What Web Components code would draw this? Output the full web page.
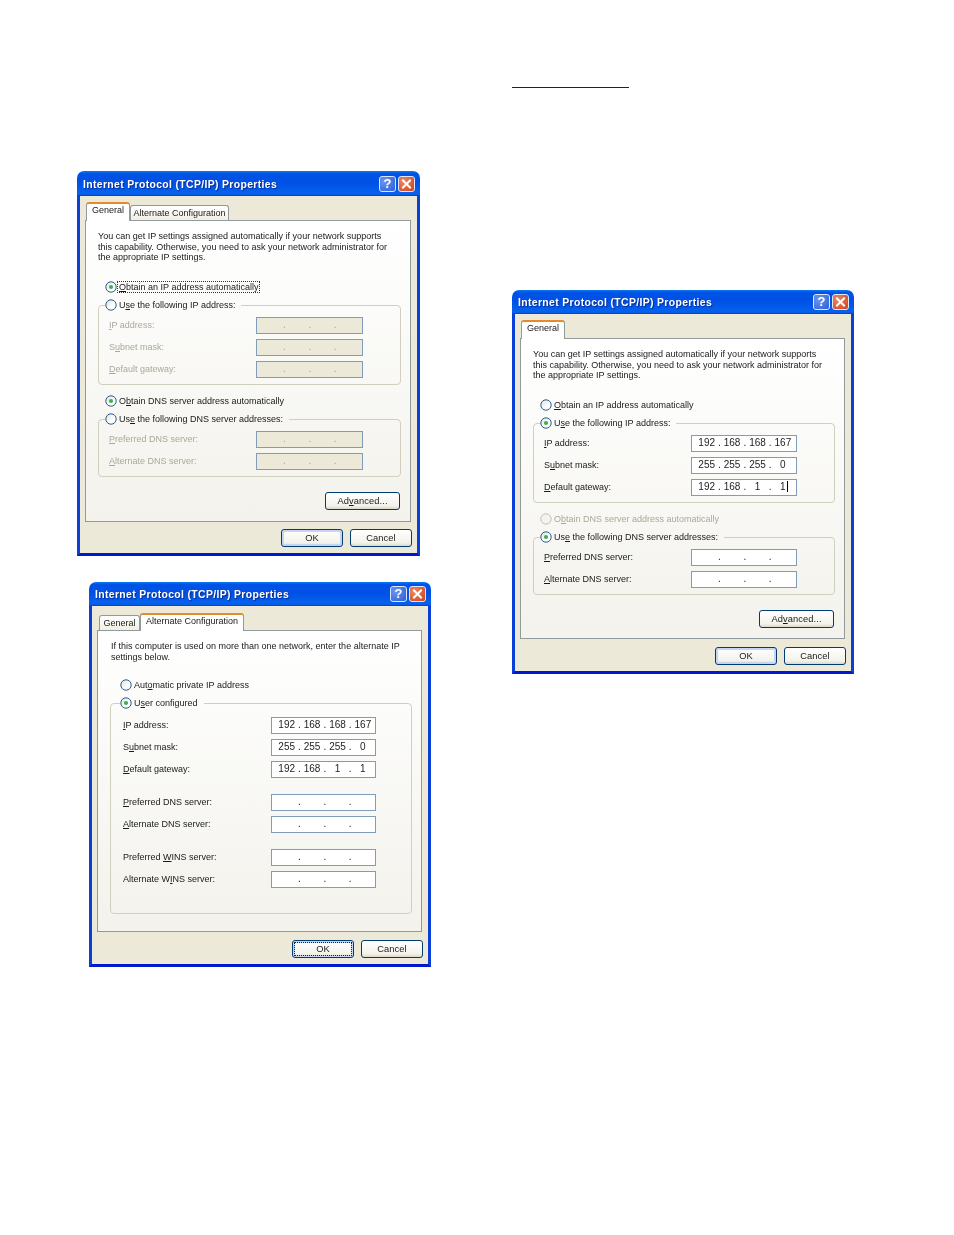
<!DOCTYPE html>
<html><head><meta charset="utf-8"><title>TCP/IP Properties</title>
<style>
html,body{margin:0;background:#fff}
body{display:flex;height:1235px;overflow:hidden;padding-left:77px;box-sizing:border-box;font:9px/10.7px "Liberation Sans",Arial,sans-serif;color:#1a1a1a}
.left{padding-top:171px}
.right{margin-left:81px}
</style></head>
<body>
<template id="t-dialog">
<style>
:host{display:flex;flex-direction:column;box-sizing:border-box;width:var(--w,343px);height:var(--h,385px);filter:blur(.35px)}
.title{flex:none;height:var(--th,25px);display:flex;align-items:center;border-radius:7px 7px 0 0;padding:0 5px 0 6px;box-sizing:border-box;
 background:linear-gradient(#0a7cf0 0,#0053e6 10%,#0050e4 45%,#0461ee 85%,#0a5de8 93%,#003dd0 100%)}
.title b{flex:1;color:#fff;font:bold 10.4px/14px "Liberation Sans",Arial,sans-serif;letter-spacing:.36px;text-shadow:1px 1px 1px #0a2a90;padding-top:2px}
.cap{width:17px;height:16px;box-sizing:border-box;border:1px solid #dfe8fb;border-radius:3px;display:flex;align-items:center;justify-content:center;margin-left:2px}
.help{background:radial-gradient(circle at 30% 30%,#6b97f0,#2c5cd8);color:#fff;font:bold 13px/14px "Liberation Sans",Arial,sans-serif}
.close{background:radial-gradient(circle at 30% 30%,#ea8a66,#cf4016)}
.body{flex:1;min-height:0;display:flex;flex-direction:column;background:#ece9d8;border:3px solid #0a3fd8;border-top:0;border-bottom-color:#0019cf;padding:var(--pt,6px) 6px 6px 5px}
.strip{flex:none;height:var(--sh,18px);display:flex;align-items:flex-end;padding-left:var(--sl,1px);position:relative;z-index:1}
.panel{flex:1;min-height:0;box-sizing:border-box;border:1px solid #919b9c;background:linear-gradient(#fff,#f3f2ec);padding:10px 9px 0 12px}
.btns{flex:none;display:flex;justify-content:flex-end;gap:7px;margin:var(--bg,7px) -1px 0 0}
</style>
<div class="title"><b></b>
<span class="cap help">?</span>
<span class="cap close"><svg width="11" height="10" viewBox="0 0 11 10"><path d="M2 1.5l7 7M9 1.5l-7 7" stroke="#fff" stroke-width="2" stroke-linecap="square" fill="none"/></svg></span></div>
<div class="body">
<div class="strip"><slot name="tabs"></slot></div>
<div class="panel"><slot></slot></div>
<div class="btns"><slot name="btns"></slot></div>
</div>
</template>
<template id="t-tab">
<style>
:host{display:block;box-sizing:border-box;height:15px;padding:0 2.5px;border:1px solid #919b9c;border-bottom:0;border-radius:3px 3px 0 0;background:linear-gradient(#fff,#f1efe4);text-align:center;line-height:15px;white-space:nowrap}
:host([active]){height:calc(var(--sh,18px) + 1px);margin-bottom:-1px;background:#fff;border-top:2px solid #e68b2c;line-height:13px;position:relative;padding:0 5px}
</style><slot></slot>
</template>
<template id="t-radio">
<style>
:host{display:flex;align-items:center;height:var(--rh,18px);white-space:nowrap;margin-left:var(--rx,7px)}
:host([inlegend]){height:14px;margin-left:0}
:host([disabled]){color:#aca899}
svg{flex:none;margin-right:1px}
.t{padding:0 1px}
:host([focus]) .t{outline:1px dotted #333;outline-offset:0}
</style>
<svg width="12" height="12" viewBox="0 0 12 12"><defs><linearGradient id="g" x1="0" y1="0" x2="1" y2="1"><stop offset="0" stop-color="#dcdcd7"/><stop offset=".6" stop-color="#fff"/></linearGradient></defs>
<circle class="c" cx="6" cy="6" r="5.2" fill="url(#g)" stroke="#2a5f8c" stroke-width="1"/><circle class="d" cx="6" cy="6" r="2.1" fill="#3fb04a"/></svg>
<span class="t"><slot></slot></span>
</template>
<template id="t-group">
<style>
:host{display:block;margin-top:var(--gm,2px)}
fieldset{margin:0;padding:var(--gt,5px) var(--gr,37px) var(--gb,6px) var(--gl,10px);border:1px solid #d0d0bf;border-radius:4px;min-width:0}
legend{padding:0 5px 0 0;margin-left:var(--lx,-4px);height:14px;display:block}
.rows{display:flex;flex-direction:column;gap:5px}
</style>
<fieldset><legend><slot name="legend"></slot></legend><div class="rows"><slot></slot></div></fieldset>
</template>
<template id="t-field">
<style>
:host{display:flex;align-items:center;height:17px;white-space:nowrap}
:host([disabled]) .l{color:#aca899}
.l{flex:1}
.i{flex:none;box-sizing:border-box;width:var(--iw,107px);height:17px;border:1px solid #7f9db9;background:#fff;display:flex;align-items:center;padding-left:4px;font-size:10px;color:#222}
:host([disabled]) .i{background:#ece9d8;color:#aca899}
.s{width:21.4px;text-align:center;position:relative}
.p{width:4px;text-align:center}
.caret{position:absolute;width:1px;height:11px;background:#000;top:-1px;margin-left:1px}
</style>
<span class="l"><slot></slot></span><span class="i"></span>
</template>
<template id="t-btn">
<style>
:host{display:flex;box-sizing:border-box;align-items:center;justify-content:center;height:18px;width:var(--bw,62px);border:1px solid #003c74;border-radius:3px;background:linear-gradient(#fff,#f3f2ea 80%,#dcd8c8);white-space:nowrap;font-size:9.3px;letter-spacing:.1px}
:host([def]){box-shadow:inset 0 0 0 2px #c4d6f2}
:host([focus]) span{outline:1px dotted #222;outline-offset:0;display:flex;align-items:center;justify-content:center;width:calc(100% - 4px);height:calc(100% - 4px)}
</style><span><slot></slot></span>
</template>
<script>
const mk=(name,setup)=>customElements.define(name,class extends HTMLElement{
 constructor(){super();const r=this.attachShadow({mode:'open'});r.appendChild(document.getElementById('t-'+name.slice(3)).content.cloneNode(true));}
 connectedCallback(){setup&&setup(this,this.shadowRoot);}
});
mk('xp-dialog',(h,r)=>{r.querySelector('b').textContent=h.getAttribute('heading');});
mk('xp-tab');
mk('xp-radio',(h,r)=>{
 if(!h.hasAttribute('checked'))r.querySelector('.d').remove();
 if(h.hasAttribute('disabled')){r.querySelector('.c').setAttribute('stroke','#c5c2b2');r.querySelector('.c').setAttribute('fill','#f4f3ee');}
});
mk('xp-group');
mk('xp-field',(h,r)=>{
 const box=r.querySelector('.i'),v=(h.getAttribute('value')||'...').split('.');
 v.forEach((x,i)=>{
  const s=document.createElement('span');s.className='s';s.textContent=x;box.appendChild(s);
  if(i==3&&h.hasAttribute('caret')){const c=document.createElement('i');c.className='caret';s.appendChild(c);}
  if(i<3){const p=document.createElement('span');p.className='p';p.textContent='.';box.appendChild(p);}
 });
});
mk('xp-btn');
</script>
<div class="left">
<xp-dialog heading="Internet Protocol (TCP/IP) Properties">
 <xp-tab slot="tabs" active>General</xp-tab><xp-tab slot="tabs">Alternate Configuration</xp-tab>
 <div style="height:32px;margin-bottom:15px;white-space:nowrap">You can get IP settings assigned automatically if your network supports<br>this capability. Otherwise, you need to ask your network administrator for<br>the appropriate IP settings.</div>
 <xp-radio checked focus><u>O</u>btain an IP address automatically</xp-radio>
 <xp-group>
  <xp-radio slot="legend" inlegend>U<u>s</u>e the following IP address:</xp-radio>
  <xp-field disabled><u>I</u>P address:</xp-field>
  <xp-field disabled>S<u>u</u>bnet mask:</xp-field>
  <xp-field disabled><u>D</u>efault gateway:</xp-field>
 </xp-group>
 <xp-radio checked style="margin-top:7px">O<u>b</u>tain DNS server address automatically</xp-radio>
 <xp-group>
  <xp-radio slot="legend" inlegend>Us<u>e</u> the following DNS server addresses:</xp-radio>
  <xp-field disabled><u>P</u>referred DNS server:</xp-field>
  <xp-field disabled><u>A</u>lternate DNS server:</xp-field>
 </xp-group>
 <div style="display:flex;justify-content:flex-end;margin:15px 1px 0 0"><xp-btn style="--bw:75px">Ad<u>v</u>anced...</xp-btn></div>
 <xp-btn slot="btns" def>OK</xp-btn><xp-btn slot="btns">Cancel</xp-btn>
</xp-dialog>
<xp-dialog heading="Internet Protocol (TCP/IP) Properties" style="margin:26px 0 0 12px;--w:342px;--th:24px;--pt:7px;--sh:17px;--sl:2px;--bg:8px;--rx:10px;--lx:-3px;--gl:12px;--iw:105px;--gr:35px;--gt:7px">
 <xp-tab slot="tabs" style="padding:0 3.5px">General</xp-tab><xp-tab slot="tabs" active>Alternate Configuration</xp-tab>
 <div style="height:22px;margin-bottom:13px;white-space:nowrap;padding-left:1px">If this computer is used on more than one network, enter the alternate IP<br>settings below.</div>
 <xp-radio>Aut<u>o</u>matic private IP address</xp-radio>
 <xp-group style="--gb:25px">
  <xp-radio slot="legend" inlegend checked>U<u>s</u>er configured</xp-radio>
  <xp-field value="192.168.168.167"><u>I</u>P address:</xp-field>
  <xp-field value="255.255.255.0">S<u>u</u>bnet mask:</xp-field>
  <xp-field value="192.168.1.1"><u>D</u>efault gateway:</xp-field>
  <xp-field style="margin-top:11px"><u>P</u>referred DNS server:</xp-field>
  <xp-field><u>A</u>lternate DNS server:</xp-field>
  <xp-field style="margin-top:11px">Preferred <u>W</u>INS server:</xp-field>
  <xp-field>Alternate W<u>I</u>NS server:</xp-field>
 </xp-group>
 <xp-btn slot="btns" def focus>OK</xp-btn><xp-btn slot="btns">Cancel</xp-btn>
</xp-dialog>
</div>
<div class="right">
<div style="width:117px;height:1px;background:#222;margin-top:87px"></div>
<xp-dialog heading="Internet Protocol (TCP/IP) Properties" style="margin-top:202px;--w:342px;--h:384px;--th:24px;--bg:8px;--iw:106px">
 <xp-tab slot="tabs" active>General</xp-tab>
 <div style="height:32px;margin-bottom:15px;white-space:nowrap">You can get IP settings assigned automatically if your network supports<br>this capability. Otherwise, you need to ask your network administrator for<br>the appropriate IP settings.</div>
 <xp-radio><u>O</u>btain an IP address automatically</xp-radio>
 <xp-group>
  <xp-radio slot="legend" inlegend checked>U<u>s</u>e the following IP address:</xp-radio>
  <xp-field value="192.168.168.167"><u>I</u>P address:</xp-field>
  <xp-field value="255.255.255.0">S<u>u</u>bnet mask:</xp-field>
  <xp-field value="192.168.1.1" caret><u>D</u>efault gateway:</xp-field>
 </xp-group>
 <xp-radio disabled style="margin-top:7px">O<u>b</u>tain DNS server address automatically</xp-radio>
 <xp-group>
  <xp-radio slot="legend" inlegend checked>Us<u>e</u> the following DNS server addresses:</xp-radio>
  <xp-field><u>P</u>referred DNS server:</xp-field>
  <xp-field><u>A</u>lternate DNS server:</xp-field>
 </xp-group>
 <div style="display:flex;justify-content:flex-end;margin:15px 1px 0 0"><xp-btn style="--bw:75px">Ad<u>v</u>anced...</xp-btn></div>
 <xp-btn slot="btns" def>OK</xp-btn><xp-btn slot="btns">Cancel</xp-btn>
</xp-dialog>
</div>
</body></html>
